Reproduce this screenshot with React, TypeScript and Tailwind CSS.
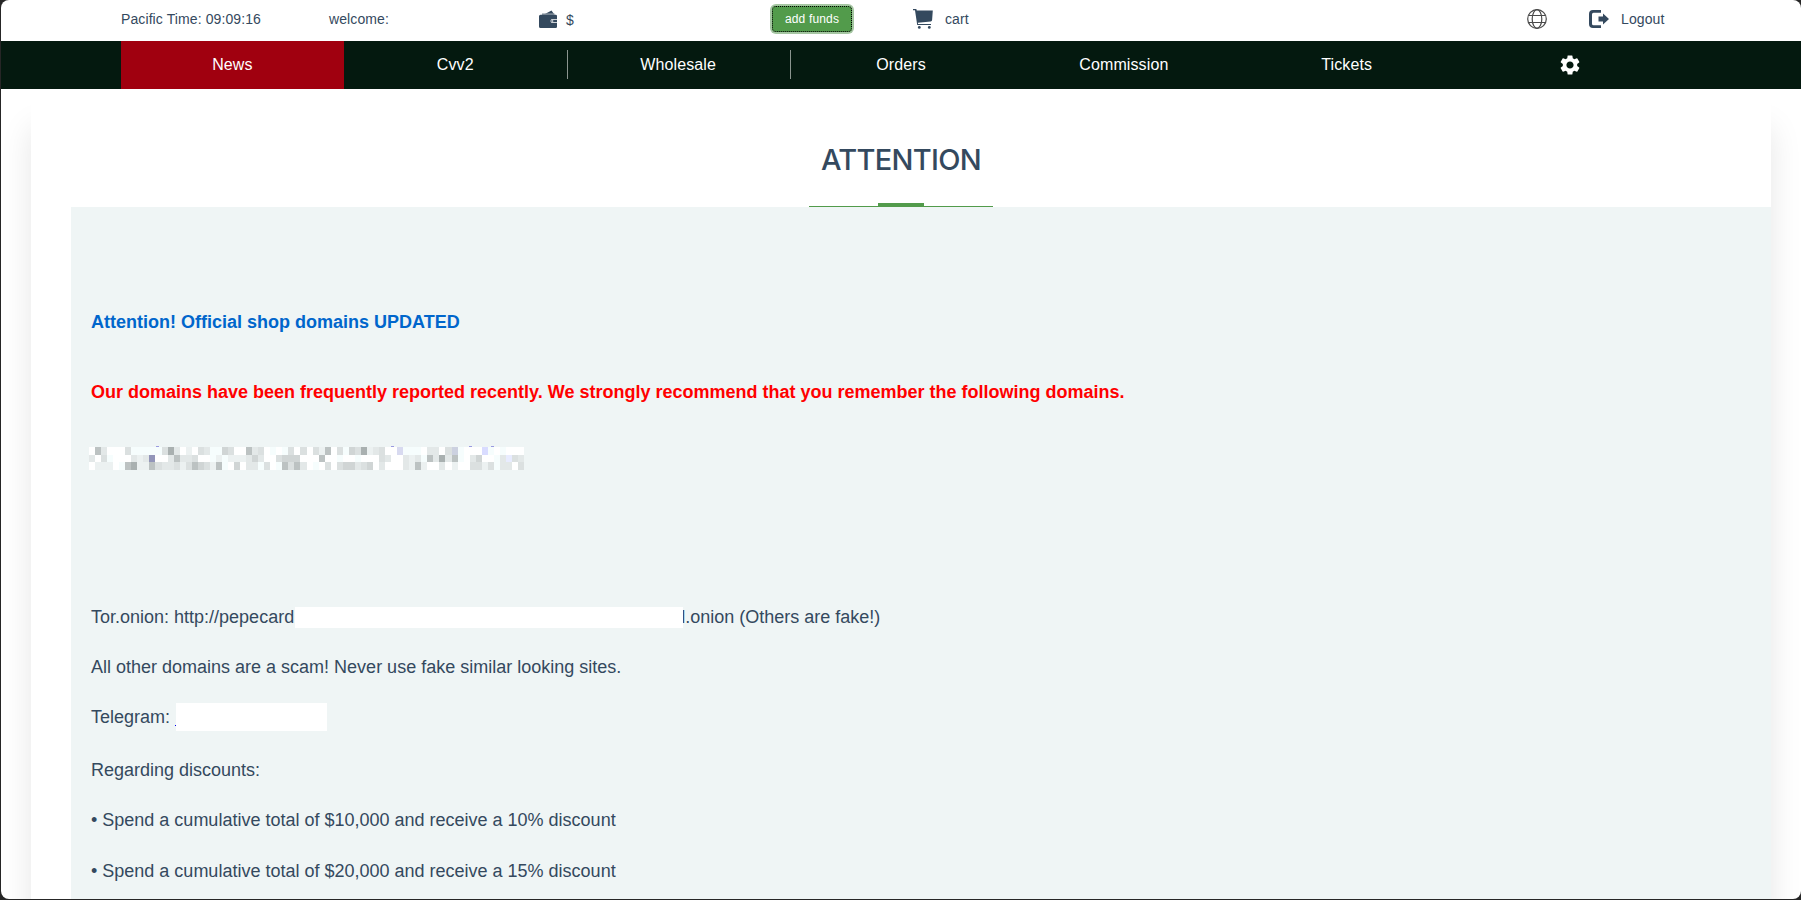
import { MdSettings } from "react-icons/md";

const navItems = [
  { label: "News", active: true },
  { label: "Cvv2", divider: true },
  { label: "Wholesale", divider: true },
  { label: "Orders" },
  { label: "Commission" },
  { label: "Tickets" },
];

// one letter per cell, see censorColors
const censorRows = [
  "wdawwwbvvvvvbeawuwbavvcbwwdabwvwvbwbwbudwbvcbeuabwwqvvvwaawbtvwwwrvwvwww",
  "awbvwwwauapwwadaabwwvuvuuuacawwbcccwwwdwwvwwvwwwbawwauavdaeadvwacwwvasba",
  "wuuuwvdeuudbaabubdcbudvwcwaavbwvdbdawvwbwbccabcwawwwauduwwawuwwbbubvaawb",
];

const censorColors: Record<string, string> = {
  w: "#ffffff",
  v: "#f6fdfd",
  u: "#ecf1f1",
  a: "#e3e8e8",
  b: "#dbe0e0",
  c: "#d0d5d5",
  d: "#bcc2c2",
  e: "#a9b0b0",
  p: "#9295b9",
  q: "#d8daf0",
  r: "#d9dcff",
  s: "#e8ecff",
  t: "#ccd1e0",
};

const censorTicks = [67, 302, 380, 402];

export default function App() {
  return (
    <div className="h-[900px] w-[1801px] overflow-hidden bg-[#262626] pb-px pl-px font-['Liberation_Sans',Arial,sans-serif] text-[#34495e]">
      <div className="flex h-[899px] flex-col overflow-hidden rounded-[8px] bg-white">
        <TopBar />
        <NavBar />
        <main className="flex grow flex-col pt-[9px] pr-[30px] pl-[30px]">
          <div className="flex grow flex-col bg-white pl-10 shadow-[0_30px_30px_rgba(0,0,0,0.10)]">
            <Title />
            <Notice />
          </div>
        </main>
      </div>
    </div>
  );
}

const TopBar = () => {
  return (
    <header className="flex h-[41px] shrink-0 items-center pb-[3px] pl-[120px] text-sm tracking-[0.1px]">
      <div className="w-[208px]">Pacific Time: 09:09:16</div>
      <div className="w-[210px]">welcome:</div>
      <div className="flex w-[233px] items-center gap-[9px]">
        <WalletIcon />
        <span className="pt-0.5">$</span>
      </div>
      <div className="w-[141px]">
        <button className="block h-[26px] w-20 rounded-[4px] border border-dotted border-black bg-[#529b4b] text-xs tracking-[0.15px] text-white shadow-[0_0_0_2px_#a5c6a2]">
          add funds
        </button>
      </div>
      <div className="flex w-[614px] items-center gap-3">
        <CartIcon />
        <span>cart</span>
      </div>
      <div className="w-[62px]">
        <GlobeIcon />
      </div>
      <div className="flex items-center gap-3">
        <LogoutIcon />
        <span>Logout</span>
      </div>
    </header>
  );
};

const NavBar = () => {
  return (
    <nav className="flex h-12 shrink-0 bg-[#04190f] px-[120px] text-base tracking-[0.1px] text-white">
      {navItems.map((item) => (
        <div
          key={item.label}
          className={
            item.active
              ? "flex flex-1 items-center bg-[#a0000f]"
              : "flex flex-1 items-center"
          }
        >
          <span className="grow text-center">{item.label}</span>
          {item.divider && <span className="-mr-px mb-0.5 h-[29px] w-px bg-[#8b958f]" />}
        </div>
      ))}
      <div className="flex flex-1 items-center justify-center">
        <MdSettings size={24} />
      </div>
    </nav>
  );
};

const Title = () => {
  return (
    <div className="flex h-[109px] shrink-0 flex-col items-center pr-10">
      <h1 className="h-[105px] pt-[39px] font-['Inter',sans-serif] text-[29px] leading-[45px] font-medium tracking-[-0.7px]">
        ATTENTION
      </h1>
      <div className="flex w-[184px] flex-col items-center">
        <div className="h-[3px] w-[46px] bg-[#529b4b]" />
        <div className="h-px w-full bg-[#529b4b]" />
      </div>
    </div>
  );
};

const Notice = () => {
  return (
    <section className="flex grow flex-col bg-[#eff5f5] pt-[95px] pl-5 text-lg leading-10">
      <p className="font-bold text-[#0066cc]">Attention! Official shop domains UPDATED</p>
      <p className="mt-[30px] font-bold text-[#ff0000]">
        Our domains have been frequently reported recently. We strongly recommend that you remember the
        following domains.
      </p>
      <Censored />
      <p className="mt-[127px] flex items-center whitespace-pre">
        Tor.onion: http://pepecard
        <span className="z-10 ml-px h-[21px] w-[388px] bg-white" />
        <span className="-ml-0.5">l.onion (Others are fake!)</span>
      </p>
      <p className="mt-2.5">All other domains are a scam! Never use fake similar looking sites.</p>
      <p className="mt-2.5 flex items-center whitespace-pre">
        Telegram: <span className="mt-4 h-px w-px bg-[#0000ee]" />
        <span className="h-7 w-[151px] bg-white" />
      </p>
      <p className="mt-[13px]">Regarding discounts:</p>
      <p className="mt-2.5">• Spend a cumulative total of $10,000 and receive a 10% discount</p>
      <p className="mt-[11px]">• Spend a cumulative total of $20,000 and receive a 15% discount</p>
    </section>
  );
};

const Censored = () => {
  return (
    <svg
      className="mt-[34px] -ml-0.5 shrink-0"
      width={435}
      height={24}
      viewBox="0 0 435 24"
      shapeRendering="crispEdges"
    >
      {censorTicks.map((x) => (
        <rect key={x} x={x} y={0} width={3} height={1} fill="#9a9ae0" />
      ))}
      {censorRows.map((row, y) =>
        row.split("").map((cell, x) => (
          <rect
            key={`${x}-${y}`}
            x={x * 6.042}
            y={1 + y * 7.67}
            width={6.05}
            height={7.67}
            fill={censorColors[cell]}
          />
        ))
      )}
    </svg>
  );
};

const WalletIcon = () => {
  return (
    <svg width={18} height={19} viewBox="0 0 18 19">
      <path d="M6 4 12.500.5 15 4z" fill="#34495e" />
      <path d="M3 3.400h12.500V5H3z" fill="#8e9aa6" />
      <path
        d="M1.500 4.800h15.200A1.300 1.300 0 0 1 18 6.100V9h-4.500a2 2 0 0 0 0 4H18v3.700a1.300 1.300 0 0 1-1.300 1.300H1.500A1.500 1.500 0 0 1 0 16.500V6.300a1.500 1.500 0 0 1 1.500-1.500z"
        fill="#34495e"
      />
      <path d="M13.500 9.800H18v2.400h-4.500a1.200 1.200 0 0 1 0-2.400z" fill="#34495e" />
      <circle cx="13.600" cy="11" r=".8" fill="#fff" />
    </svg>
  );
};

const CartIcon = () => {
  return (
    <svg width={20} height={20} viewBox="0 0 20 20" fill="#34495e">
      <path d="M0 0h3.300l.5 1.500h16l-.7 9.500a1.600 1.600 0 0 1-1.400 1.500L4.800 13.700l.3 1.200H18v1.200H4.200L2 1.300H0z" />
      <circle cx="6.300" cy="18.400" r="1.400" />
      <circle cx="16.300" cy="18.400" r="1.400" />
    </svg>
  );
};

const GlobeIcon = () => {
  return (
    <svg width={20} height={20} viewBox="0 0 20 20" fill="none" stroke="#4a4a4a" strokeWidth={1.2}>
      <circle cx="10" cy="10" r="9.300" />
      <ellipse cx="10" cy="10" rx="4.800" ry="9.300" />
      <path d="M1.700 6.500h16.600M1.700 13.500h16.600" />
    </svg>
  );
};

const LogoutIcon = () => {
  return (
    <svg width={20} height={18} viewBox="0 0 20 18" fill="#34495e">
      <path d="M12 0H4a4 4 0 0 0-4 4v10a4 4 0 0 0 4 4h8v-2.800H4.500A1.500 1.500 0 0 1 3 13.700V4.300a1.500 1.500 0 0 1 1.500-1.500H12z" />
      <path d="M9.500 6.500H14V3.500l6 5.500-6 5.500v-3H9.500z" />
    </svg>
  );
};
